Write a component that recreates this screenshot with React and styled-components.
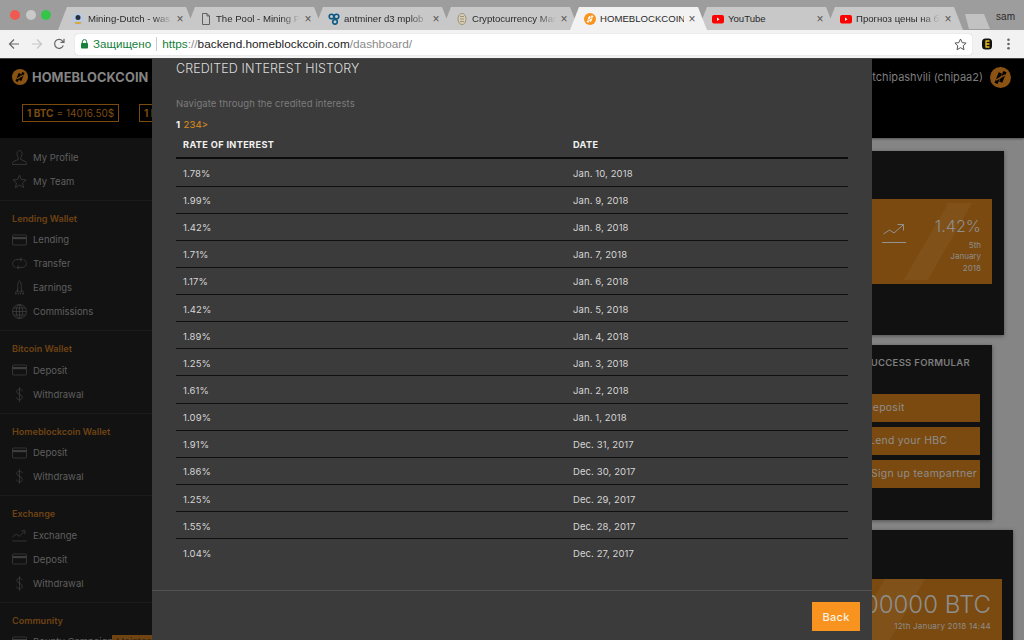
import React from 'react';
import styled, { createGlobalStyle } from 'styled-components';

const GlobalStyle = createGlobalStyle`
  html, body {
    margin: 0;
    height: 100%;
    overflow: hidden;
    background: #858585;
    font-family: Inter, "Liberation Sans", sans-serif;
  }
  #root {
    height: 100%;
  }
  * {
    box-sizing: border-box;
  }
`;

const Window = styled.div`
  display: flex;
  flex-direction: column;
  width: 1024px;
  height: 640px;
  overflow: hidden;
`;

/* browser chrome */
const TabStrip = styled.div`
  display: flex;
  align-items: flex-end;
  flex: 0 0 30px;
  position: relative;
  padding-left: 58px;
  background: #9d9d9d;
`;

const Lights = styled.div`
  position: absolute;
  top: 10px;
  left: 10px;
  display: flex;
  gap: 5.5px;
`;

const Light = styled.span`
  width: 10px;
  height: 10px;
  border-radius: 50%;
  background: ${props => props.color};
`;

const Tab = styled.div`
  display: flex;
  align-items: center;
  flex: 0 0 137px;
  min-width: 0;
  height: 23px;
  margin-right: -9px;
  padding: 0 10px 0 14px;
  background: ${props => (props.active ? '#f2f2f2' : '#c8c8c8')};
  clip-path: polygon(0 100%, 9px 0, calc(100% - 9px) 0, 100% 100%);
  position: relative;
  z-index: ${props => (props.active ? 2 : 1)};
`;

const TabIcon = styled.span`
  display: flex;
  flex: 0 0 12px;
  width: 12px;
  height: 12px;
  margin-right: 4px;
`;

const TabTitle = styled.span`
  flex: 1;
  min-width: 0;
  overflow: hidden;
  white-space: nowrap;
  font: 9.6px "Liberation Sans", Arial, sans-serif;
  color: #2a2a2a;
  -webkit-mask-image: ${props =>
    props.fade ? 'linear-gradient(to right, #000 78%, transparent 100%)' : 'none'};
`;

const TabClose = styled.span`
  flex: 0 0 10px;
  margin-left: 3px;
  font: 12px "Liberation Sans", Arial, sans-serif;
  color: #555;
  text-align: center;
`;

const NewTab = styled.div`
  width: 25px;
  height: 15px;
  margin: 0 0 1px 11px;
  background: #c2c2c2;
  clip-path: polygon(4px 100%, 0 0, 19px 0, 100% 100%);
`;

const Profile = styled.div`
  position: absolute;
  top: 11px;
  right: 9px;
  font: 10px "Liberation Sans", Arial, sans-serif;
  color: #2a2a2a;
`;

const Toolbar = styled.div`
  display: flex;
  align-items: center;
  flex: 0 0 29px;
  padding: 0 6px 0 7px;
  background: #f2f2f2;
  border-bottom: 1px solid #444;
`;

const NavButton = styled.span`
  display: flex;
  justify-content: center;
  width: 13px;
  margin-right: ${props => props.gap || 0}px;
`;

const Omnibox = styled.div`
  display: flex;
  align-items: center;
  flex: 0 0 897px;
  height: 21px;
  padding: 0 5px 0 5px;
  border-radius: 3px;
  background: #fff;
  box-shadow: 0 0 1px rgba(0, 0, 0, 0.3);
  font: 11.8px "Liberation Sans", Arial, sans-serif;
  white-space: nowrap;
`;

const Secure = styled.span`
  margin-left: 4px;
  padding-right: 5px;
  border-right: 1px solid #ccc;
  font-size: 11.6px;
  line-height: 14px;
  color: #16803c;
`;

const UrlPart = styled.span`
  color: ${props => props.color};
`;

const UrlWrap = styled.span`
  flex: 1;
  padding-left: 5px;
`;

const ToolbarIcons = styled.div`
  display: flex;
  align-items: center;
  gap: 15px;
  margin-left: 10px;
`;

/* dimmed page behind the modal */
const Page = styled.div`
  flex: 1;
  position: relative;
  display: flex;
  flex-direction: column;
  min-height: 0;
  overflow: hidden;
`;

const Header = styled.header`
  flex: 0 0 79px;
  padding: 7px 13px 0 12px;
  background: #000;
  box-shadow: 0 1px 2px rgba(0, 0, 0, 0.4);
`;

const HeaderTop = styled.div`
  display: flex;
  align-items: center;
  justify-content: space-between;
  height: 22px;
`;

const Brand = styled.div`
  display: flex;
  align-items: center;
  gap: 4px;
  font-size: 12.8px;
  font-weight: 700;
  letter-spacing: 0.1px;
  color: #848484;
`;

const User = styled.div`
  display: flex;
  align-items: center;
  gap: 7px;
  font-size: 11px;
  color: #7e7e7e;
`;

const Prices = styled.div`
  display: flex;
  gap: 20px;
  margin: 16px 0 0 10px;
`;

const Price = styled.div`
  display: flex;
  align-items: center;
  gap: 3px;
  width: 97px;
  height: 18px;
  padding-left: 4px;
  border: 1px solid #7a4a10;
  font-size: 10px;
  color: #7d4c12;
  white-space: nowrap;
  overflow: hidden;
`;

const PriceCoin = styled.b`
  font-weight: 700;
`;

const Body = styled.div`
  flex: 1;
  display: flex;
  min-height: 0;
`;

const Sidebar = styled.aside`
  flex: 0 0 160px;
  background: #121212;
`;

const Group = styled.section`
  padding: ${props => (props.first ? '7px 0 6.5px' : '12px 0 6.5px')};
  border-bottom: 1px solid #1b1b1b;
`;

const GroupLabel = styled.div`
  margin-bottom: 3px;
  padding-left: 12px;
  font-size: 9.1px;
  font-weight: 600;
  line-height: 12px;
  color: #6f4312;
`;

const Item = styled.div`
  display: flex;
  align-items: center;
  height: 24px;
  padding-left: 12px;
  font-size: 9.5px;
  color: #5f5f5f;
  white-space: nowrap;
`;

const ItemIcon = styled.span`
  display: flex;
  flex: 0 0 15px;
  justify-content: center;
  margin-right: 6px;
`;

const Badge = styled.span`
  margin-left: -1px;
  padding: 1px 4px;
  background: #6f4312;
  color: #3a2a15;
`;

const Main = styled.main`
  flex: 1;
  display: flex;
  flex-direction: column;
  align-items: flex-end;
  gap: 10px;
  padding-top: 13px;
  min-width: 0;
`;

const Card = styled.div`
  flex: 0 0 ${props => props.height}px;
  display: flex;
  flex-direction: column;
  align-items: flex-end;
  width: 400px;
  margin-right: ${props => props.right}px;
  padding: ${props => props.pad};
  background: #111;
  box-shadow: 0 1px 4px rgba(0, 0, 0, 0.4);
`;

const OrangeBox = styled.div`
  position: relative;
  display: flex;
  align-items: center;
  justify-content: flex-end;
  overflow: hidden;
  width: 360px;
  height: ${props => props.height}px;
  background: #7b4a10;
`;

const Stripe = styled.span`
  position: absolute;
  top: ${props => props.top}px;
  left: ${props => props.left}px;
  width: ${props => props.width}px;
  height: ${props => props.height}px;
  background: rgba(255, 255, 255, 0.04);
  transform: skewX(-30deg);
`;

const Rate = styled.div`
  position: relative;
  width: 72px;
  margin-top: 6px;
  padding-right: 11px;
  text-align: right;
  color: #8e8e8e;
`;

const RateValue = styled.div`
  font-size: 16.2px;
  font-weight: 300;
  line-height: 22px;
  white-space: nowrap;
`;

const RateDate = styled.div`
  margin-top: 3px;
  font-size: 8px;
  line-height: 11.5px;
`;

const TrendIcon = styled.span`
  position: absolute;
  right: 85px;
  top: 24px;
  display: flex;
`;

const CardTitle = styled.div`
  margin: 0 10px 25px 0;
  font-size: 9.5px;
  font-weight: 600;
  letter-spacing: 0.3px;
  line-height: 12px;
  color: #7d7d7d;
`;

const FormulaButton = styled.div`
  flex: 0 0 28px;
  width: 300px;
  margin-bottom: 5px;
  padding-left: ${props => props.indent}px;
  background: #7b4a10;
  font-size: 10.4px;
  letter-spacing: 0.3px;
  line-height: 28px;
  color: #8e8e8e;
  white-space: nowrap;
`;

const BalanceBox = styled(OrangeBox)`
  flex-direction: column;
  align-items: flex-end;
  justify-content: flex-start;
  padding: 12px 11px 0 0;
  color: #8e8e8e;
`;

const BalanceValue = styled.div`
  position: relative;
  font-size: 24px;
  font-weight: 300;
  line-height: 28px;
  white-space: nowrap;
`;

const BalanceDate = styled.div`
  position: relative;
  margin-top: 2px;
  font-size: 8px;
  letter-spacing: 0.2px;
  line-height: 10px;
`;

/* modal */
const Modal = styled.div`
  position: absolute;
  top: 0;
  bottom: 0;
  left: 152px;
  display: flex;
  flex-direction: column;
  width: 720px;
  background: #3b3b3b;
`;

const ModalBody = styled.div`
  flex: 1;
  min-height: 0;
  padding: 3px 24px 0;
`;

const ModalTitle = styled.h2`
  margin: 0;
  font-size: 12.5px;
  font-weight: 300;
  line-height: 14px;
  letter-spacing: 0.1px;
  color: #dcdcdc;
`;

const ModalHint = styled.p`
  margin: 21px 0 0;
  font-size: 9.5px;
  line-height: 14px;
  letter-spacing: 0.1px;
  color: #7c7c7c;
`;

const Pager = styled.div`
  margin-top: 7px;
  font-size: 9.5px;
  font-weight: 500;
  line-height: 14px;
  color: #c78120;
`;

const PagerCurrent = styled.b`
  margin-right: 3.5px;
  font-weight: 700;
  color: #f5f5f5;
`;

const Table = styled.table`
  width: 672px;
  border-collapse: collapse;
  table-layout: fixed;
`;

const HeadCell = styled.th`
  width: ${props => props.width};
  height: 26px;
  padding: 0 0 0 7px;
  border-bottom: 2px solid #0c0c0c;
  font-size: 9.2px;
  font-weight: 700;
  letter-spacing: 0.35px;
  text-align: left;
  color: #f1f1f1;
`;

const Row = styled.tr`
  &:first-child td {
    height: 28px;
  }

  &:last-child td {
    border-bottom: 0;
  }
`;

const Cell = styled.td`
  height: 27.15px;
  padding: 2px 0 0 7px;
  border-bottom: 1px solid #0f0f0f;
  font-size: 9.5px;
  letter-spacing: 0.1px;
  color: #d6d6d6;
`;

const ModalFooter = styled.div`
  display: flex;
  justify-content: flex-end;
  flex: 0 0 50px;
  padding: 11px 12px 0 0;
  border-top: 1px solid #525252;
`;

const BackButton = styled.button`
  width: 48px;
  height: 29px;
  padding: 0;
  border: 0;
  background: #f7931e;
  font-family: inherit;
  font-size: 11px;
  font-weight: 500;
  letter-spacing: 0.3px;
  color: #fdf1e0;
`;

const rates = [
  ['1.78%', 'Jan. 10, 2018'],
  ['1.99%', 'Jan. 9, 2018'],
  ['1.42%', 'Jan. 8, 2018'],
  ['1.71%', 'Jan. 7, 2018'],
  ['1.17%', 'Jan. 6, 2018'],
  ['1.42%', 'Jan. 5, 2018'],
  ['1.89%', 'Jan. 4, 2018'],
  ['1.25%', 'Jan. 3, 2018'],
  ['1.61%', 'Jan. 2, 2018'],
  ['1.09%', 'Jan. 1, 2018'],
  ['1.91%', 'Dec. 31, 2017'],
  ['1.86%', 'Dec. 30, 2017'],
  ['1.25%', 'Dec. 29, 2017'],
  ['1.55%', 'Dec. 28, 2017'],
  ['1.04%', 'Dec. 27, 2017']
];

const Logo = ({ size, fill, ink }) => (
  <svg width={size} height={size} viewBox="0 0 20 20" fill="none">
    <circle cx="10" cy="10" r="10" fill={fill} />
    <path d="M5.800 15.500L9.800 5.500M10.200 14.500L14.200 4.500" stroke={ink} strokeWidth="3.200" />
    <path d="M5.500 12.500L14.500 7.500" stroke={fill} strokeWidth="1.400" />
  </svg>
);

const Line = ({ children, w = 15, h = 15, color = '#3d3d3d' }) => (
  <svg width={w} height={h} viewBox={`0 0 15 ${h}`} fill="none" stroke={color} strokeWidth="0.8">
    {children}
  </svg>
);

const ProfileIcon = () => (
  <Line>
    <path d="M5 3.600C5 1.900 6 .6 7.500 .6S10 1.900 10 3.600c0 1.800-.9 3.600-1.300 4.200v1.600l4.500 2c.9.4 1.300 1 1.300 2.100v.9H.5v-.9c0-1.100.4-1.700 1.300-2.100l4.500-2V7.800C5.900 7.200 5 5.400 5 3.600Z" />
  </Line>
);

const StarIcon = () => (
  <Line>
    <path d="M7.500 1.200l1.900 4.300 4.700.4-3.600 3.100 1.100 4.600-4.100-2.500-4.100 2.500 1.100-4.600L.9 5.900l4.700-.4z" />
  </Line>
);

const CardIcon = () => (
  <Line h={12}>
    <rect x="0.500" y="1" width="14" height="10" rx="1" />
    <rect x="0.500" y="3" width="14" height="2.200" fill="#3d3d3d" stroke="none" />
  </Line>
);

const TransferIcon = () => (
  <Line h={13}>
    <path d="M3.500 10.500C1.700 9.800.6 8.300.6 6.500.6 4 2.800 2.500 5 2.500h5M8 .6l2.200 1.900L8 4.400M11.500 2.500c1.800.7 2.900 2.200 2.900 4 0 2.500-2.200 4-4.400 4H5M7 8.600l-2.200 1.900L7 12.400" />
  </Line>
);

const RocketIcon = () => (
  <Line>
    <path d="M7.500.6c1.200 1.300 1.800 3 1.800 5v6.200H5.700V5.600c0-2 .6-3.700 1.800-5ZM5.700 9.500l-2 2.700v2.100l2-1.500M9.300 9.500l2 2.700v2.100l-2-1.500M6.500 13v1.500M8.500 13v1.500" />
  </Line>
);

const GlobeIcon = () => (
  <Line>
    <circle cx="7.500" cy="7.500" r="7" />
    <ellipse cx="7.500" cy="7.500" rx="3.200" ry="7" />
    <path d="M7.500.5v14M.5 7.500h14M1.500 4h12M1.500 11h12" />
  </Line>
);

const DollarIcon = () => (
  <Line>
    <path d="M10.200 4.200C10 2.900 9 2.200 7.500 2.200S4.800 3 4.800 4.500c0 3.300 5.500 2.300 5.500 5.800 0 1.600-1.200 2.500-2.800 2.500S4.800 12 4.700 10.600M7.500.2v14.600" />
  </Line>
);

const ExchangeIcon = () => (
  <Line>
    <path d="M.5 9l3.800-3 3 2.300L12.500 3.200M9.500 2.700h3.400v3.400M.3 13h14.400" />
  </Line>
);

const menu = [
  { items: [['My Profile', ProfileIcon], ['My Team', StarIcon]] },
  {
    label: 'Lending Wallet',
    items: [['Lending', CardIcon], ['Transfer', TransferIcon], ['Earnings', RocketIcon], ['Commissions', GlobeIcon]]
  },
  { label: 'Bitcoin Wallet', items: [['Deposit', CardIcon], ['Withdrawal', DollarIcon]] },
  { label: 'Homeblockcoin Wallet', items: [['Deposit', CardIcon], ['Withdrawal', DollarIcon]] },
  { label: 'Exchange', items: [['Exchange', ExchangeIcon], ['Deposit', CardIcon], ['Withdrawal', DollarIcon]] }
];

const DocIcon = () => (
  <svg width="12" height="12" viewBox="0 0 12 12" fill="none" stroke="#555" strokeWidth="0.9">
    <path d="M2.500.5h4.500l2.500 2.500v8.500h-7zM7 .5V3h2.500" />
  </svg>
);

const YoutubeIcon = () => (
  <svg width="12" height="12" viewBox="0 0 12 12">
    <rect y="2" width="12" height="8.500" rx="2" fill="#f00" />
    <path d="M5 4.500l2.500 1.700L5 8z" fill="#fff" />
  </svg>
);

const tabs = [
  {
    title: 'Mining-Dutch - was',
    fade: true,
    icon: (
      <svg width="12" height="12" viewBox="0 0 12 12">
        <circle cx="6" cy="6" r="6" fill="#b9c9e0" />
        <circle cx="6" cy="4.500" r="2.500" fill="#24303c" />
        <path d="M2.500 9h7l-1 2h-5z" fill="#d8a93a" />
      </svg>
    )
  },
  { title: 'The Pool - Mining Pool', fade: true, icon: <DocIcon /> },
  {
    title: 'antminer d3 mplob',
    fade: true,
    icon: (
      <svg width="12" height="12" viewBox="0 0 12 12" fill="none" stroke="#0e5a86" strokeWidth="1.600">
        <circle cx="3.500" cy="3.500" r="2.300" />
        <circle cx="8.500" cy="3.500" r="2.300" />
        <circle cx="7" cy="8.800" r="2.300" />
      </svg>
    )
  },
  {
    title: 'Cryptocurrency Mar',
    fade: true,
    icon: (
      <svg width="12" height="12" viewBox="0 0 12 12">
        <ellipse cx="6" cy="6" rx="4" ry="5.500" fill="#d9cfb8" stroke="#8f8468" strokeWidth="0.800" />
        <path d="M4 3.500h4M4 6h4M4 8.500h4" stroke="#8f8468" strokeWidth="0.800" />
      </svg>
    )
  },
  { title: 'HOMEBLOCKCOIN', active: true, icon: <Logo size={12} fill="#f7931e" ink="#fff" /> },
  { title: 'YouTube', icon: <YoutubeIcon /> },
  { title: 'Прогноз цены на бит', fade: true, icon: <YoutubeIcon /> }
];

const App = () => (
  <Window>
    <GlobalStyle />
    <TabStrip>
      <Lights>
        <Light color="#ee5a52" />
        <Light color="#c9c9c9" />
        <Light color="#35c649" />
      </Lights>
      {tabs.map(tab => (
        <Tab key={tab.title} active={tab.active}>
          <TabIcon>{tab.icon}</TabIcon>
          <TabTitle fade={tab.fade}>{tab.title}</TabTitle>
          <TabClose>×</TabClose>
        </Tab>
      ))}
      <NewTab />
      <Profile>sam</Profile>
    </TabStrip>
    <Toolbar>
      <NavButton gap={10}>
        <svg width="12" height="12" viewBox="0 0 12 12" fill="none" stroke="#666" strokeWidth="1.200">
          <path d="M11 6H1.500M6 1.500L1.500 6 6 10.500" />
        </svg>
      </NavButton>
      <NavButton gap={9}>
        <svg width="12" height="12" viewBox="0 0 12 12" fill="none" stroke="#c6c6c6" strokeWidth="1.200">
          <path d="M1 6h9.500M6 1.500L10.500 6 6 10.500" />
        </svg>
      </NavButton>
      <NavButton gap={10}>
        <svg width="12" height="12" viewBox="0 0 12 12" fill="none" stroke="#666" strokeWidth="1.200">
          <path d="M10.300 7.500A4.500 4.500 0 1 1 9.500 2.800L11 4.300M11 .8v3.500H7.500" />
        </svg>
      </NavButton>
      <Omnibox>
        <svg width="9" height="10" viewBox="0 0 9 10">
          <path d="M2.300 4V2.800a2.200 2.200 0 0 1 4.400 0V4" fill="none" stroke="#16803c" strokeWidth="1" />
          <rect x="1" y="4" width="7" height="5.500" rx="0.800" fill="#16803c" />
        </svg>
        <Secure>Защищено</Secure>
        <UrlWrap>
          <UrlPart color="#16803c">https</UrlPart>
          <UrlPart color="#8a8a8a">://</UrlPart>
          <UrlPart color="#1c1c1c">backend.homeblockcoin.com</UrlPart>
          <UrlPart color="#8a8a8a">/dashboard/</UrlPart>
        </UrlWrap>
        <svg width="13" height="13" viewBox="0 0 13 13" fill="none" stroke="#555" strokeWidth="1">
          <path d="M6.500 1l1.700 3.600 3.900.5-2.900 2.700.8 3.900-3.500-2-3.500 2 .8-3.900L.9 5.100l3.900-.5z" />
        </svg>
      </Omnibox>
      <ToolbarIcons>
        <svg width="10" height="12" viewBox="0 0 10 12">
          <rect x="0" y="0.500" width="10" height="11" rx="3.500" fill="#111" />
          <path d="M3.500 3h4M3.500 6h4M3.500 9h4M4 3v6" stroke="#f0c420" strokeWidth="1.300" />
        </svg>
        <svg width="3" height="12" viewBox="0 0 3 12" fill="#666">
          <circle cx="1.500" cy="1.800" r="1.300" />
          <circle cx="1.500" cy="6" r="1.300" />
          <circle cx="1.500" cy="10.200" r="1.300" />
        </svg>
      </ToolbarIcons>
    </Toolbar>
    <Page>
      <Header>
        <HeaderTop>
          <Brand>
            <Logo size={16} fill="#8a5313" ink="#000" />
            HOMEBLOCKCOIN
          </Brand>
          <User>
            Matchipashvili (chipaa2)
            <Logo size={21} fill="#8a5313" ink="#000" />
          </User>
        </HeaderTop>
        <Prices>
          <Price>
            <PriceCoin>1 BTC</PriceCoin> = 14016.50$
          </Price>
          <Price>
            <PriceCoin>1 HBC</PriceCoin> = 1.00$
          </Price>
        </Prices>
      </Header>
      <Body>
        <Sidebar>
          {menu.map((group, index) => (
            <Group key={index} first={!group.label}>
              {group.label && <GroupLabel>{group.label}</GroupLabel>}
              {group.items.map(([name, Icon]) => (
                <Item key={name}>
                  <ItemIcon>
                    <Icon />
                  </ItemIcon>
                  {name}
                </Item>
              ))}
            </Group>
          ))}
          <Group>
            <GroupLabel>Community</GroupLabel>
            <Item>
              <ItemIcon>
                <CardIcon />
              </ItemIcon>
              Bounty Campaign
              <Badge>Maintenance</Badge>
            </Item>
          </Group>
        </Sidebar>
        <Main>
          <Card height={184} right={20} pad="48px 12px 0 0">
            <OrangeBox height={85}>
              <Stripe top={4} left={294} width={24} height={77} />
              <TrendIcon>
                <svg width="25" height="22" viewBox="0 0 25 22" fill="none" stroke="#929292" strokeWidth="1">
                  <path d="M1.500 11l6-4 4.500 3L21 2M15.500 1.500h6v6M0 19.500h24" />
                </svg>
              </TrendIcon>
              <Rate>
                <RateValue>1.42%</RateValue>
                <RateDate>
                  5th
                  <br />
                  January
                  <br />
                  2018
                </RateDate>
              </Rate>
            </OrangeBox>
          </Card>
          <Card height={175} right={32} pad="12px 12px 0 0">
            <CardTitle>MY SUCCESS FORMULAR</CardTitle>
            <FormulaButton indent={185}>Deposit</FormulaButton>
            <FormulaButton indent={189}>Lend your HBC</FormulaButton>
            <FormulaButton indent={191}>Sign up teampartner</FormulaButton>
          </Card>
          <Card height={200} right={11} pad="49px 11px 0 0">
            <BalanceBox height={90}>
              <Stripe top={0} left={217} width={40} height={90} />
              <BalanceValue>0.00000000 BTC</BalanceValue>
              <BalanceDate>12th January 2018 14:44</BalanceDate>
            </BalanceBox>
          </Card>
        </Main>
      </Body>
      <Modal>
        <ModalBody>
          <ModalTitle>CREDITED INTEREST HISTORY</ModalTitle>
          <ModalHint>Navigate through the credited interests</ModalHint>
          <Pager>
            <PagerCurrent>1</PagerCurrent>
            234&gt;
          </Pager>
          <Table>
            <thead>
              <tr>
                <HeadCell width="390px">RATE OF INTEREST</HeadCell>
                <HeadCell>DATE</HeadCell>
              </tr>
            </thead>
            <tbody>
              {rates.map(([rate, date]) => (
                <Row key={date}>
                  <Cell>{rate}</Cell>
                  <Cell>{date}</Cell>
                </Row>
              ))}
            </tbody>
          </Table>
        </ModalBody>
        <ModalFooter>
          <BackButton>Back</BackButton>
        </ModalFooter>
      </Modal>
    </Page>
  </Window>
);

export default App;
